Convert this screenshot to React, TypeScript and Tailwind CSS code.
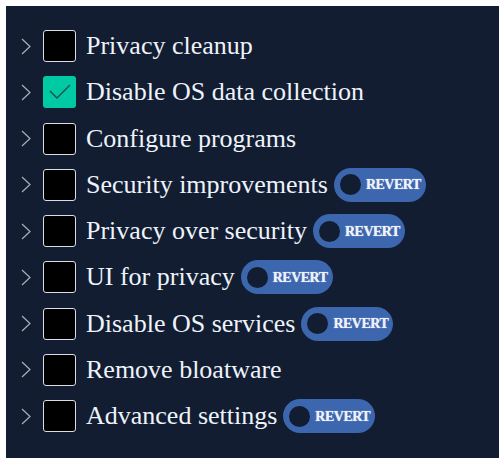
interface Item {
  label: string
  checked?: boolean
  revert?: boolean
}

const items: Item[] = [
  { label: 'Privacy cleanup' },
  { label: 'Disable OS data collection', checked: true },
  { label: 'Configure programs' },
  { label: 'Security improvements', revert: true },
  { label: 'Privacy over security', revert: true },
  { label: 'UI for privacy', revert: true },
  { label: 'Disable OS services', revert: true },
  { label: 'Remove bloatware' },
  { label: 'Advanced settings', revert: true },
]

function Chevron() {
  return (
    <svg width="10" height="17" viewBox="0 0 10 17" className="flex-shrink-0">
      <polyline points="1,1 9,8.5 1,16" fill="none" stroke="#aab1bc" strokeWidth="1.2" />
    </svg>
  )
}

function RevertToggle() {
  return (
    <span className="ml-[6px] flex h-[34px] w-[92px] items-center rounded-full bg-[#3c66ad] pl-[6px]">
      <span className="h-[21px] w-[21px] flex-shrink-0 rounded-full bg-[#121d31]" />
      <span className="ml-[5px] text-[14px] font-bold tracking-[-0.5px] text-[#eef2fa] [text-shadow:0_0_1px_#d5e0f3]">
        REVERT
      </span>
    </span>
  )
}

export default function App() {
  return (
    <div className="min-h-[467px] bg-white pl-[6px] pt-[6px]" style={{ fontFamily: '"Liberation Serif", serif' }}>
      <div className="h-[452px] bg-[#121d31] pt-[17px] pl-[15px]">
        {items.map(item => (
          <div key={item.label} className="flex h-[46.25px] items-center">
            <Chevron />
            <span
              className={`ml-[12px] flex h-[32px] w-[33px] flex-shrink-0 items-center justify-center rounded-[3px] ${
                item.checked ? 'bg-[#00caa4]' : 'border border-[#d8dde6] bg-black'
              }`}
            >
              {item.checked && (
                <svg width="22" height="16" viewBox="0 0 22 16">
                  <polyline points="1,7 8,14 21,1" fill="none" stroke="#1d4d4b" strokeWidth="1.4" />
                </svg>
              )}
            </span>
            <span className="ml-[10px] text-[26px] leading-none text-[#eef3fb]">{item.label}</span>
            {item.revert && <RevertToggle />}
          </div>
        ))}
      </div>
    </div>
  )
}
